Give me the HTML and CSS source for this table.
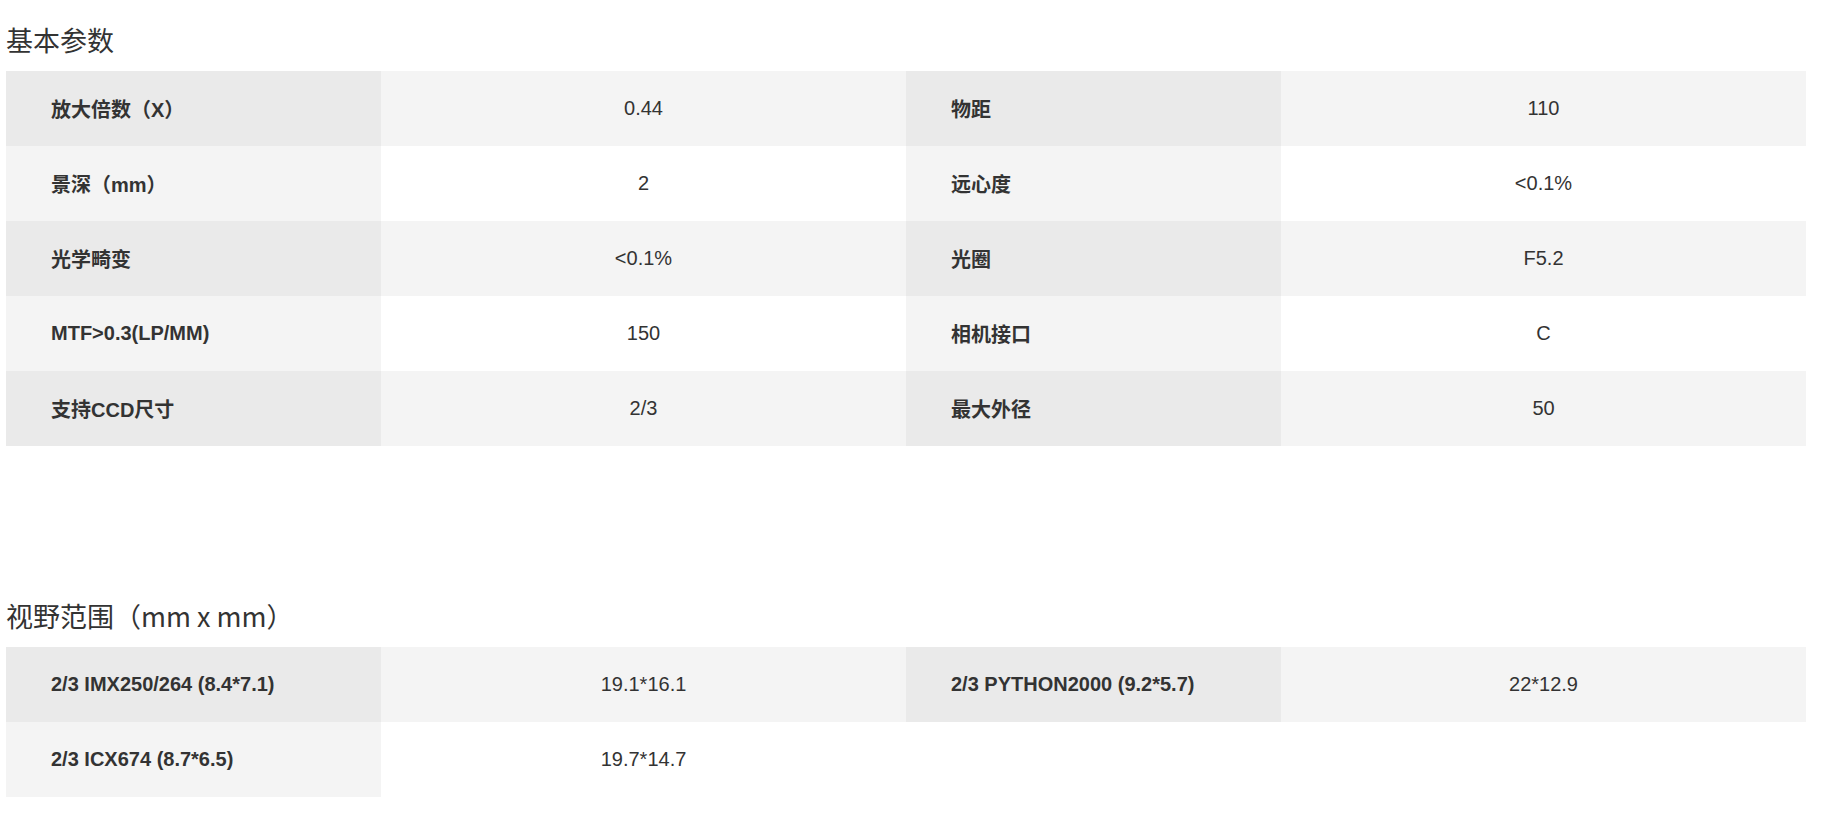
FILE: index.html
```html
<!DOCTYPE html>
<html lang="zh-CN">
<head>
<meta charset="utf-8">
<title>基本参数</title>
<link rel="stylesheet" href="styles.css">
</head>
<body>
<div class="page">
  <section class="spec">
    <h3 class="spec-title">基本参数</h3>
    <table class="spec-table">
      <colgroup>
        <col class="c-label"><col class="c-value"><col class="c-label"><col class="c-value">
      </colgroup>
      <tbody>
        <tr><th>放大倍数（X）</th><td>0.44</td><th>物距</th><td>110</td></tr>
        <tr><th>景深（mm）</th><td>2</td><th>远心度</th><td>&lt;0.1%</td></tr>
        <tr><th>光学畸变</th><td>&lt;0.1%</td><th>光圈</th><td>F5.2</td></tr>
        <tr><th>MTF&gt;0.3(LP/MM)</th><td>150</td><th>相机接口</th><td>C</td></tr>
        <tr><th>支持CCD尺寸</th><td>2/3</td><th>最大外径</th><td>50</td></tr>
      </tbody>
    </table>
  </section>

  <section class="spec spec-fov">
    <h3 class="spec-title">视野范围（mm x mm）</h3>
    <table class="spec-table">
      <colgroup>
        <col class="c-label"><col class="c-value"><col class="c-label"><col class="c-value">
      </colgroup>
      <tbody>
        <tr><th>2/3 IMX250/264 (8.4*7.1)</th><td>19.1*16.1</td><th>2/3 PYTHON2000 (9.2*5.7)</th><td>22*12.9</td></tr>
        <tr><th>2/3 ICX674 (8.7*6.5)</th><td>19.7*14.7</td><td class="empty"></td><td class="empty"></td></tr>
      </tbody>
    </table>
  </section>
</div>
</body>
</html>
```

FILE: styles.css
```css
html, body {
  margin: 0;
  padding: 0;
  background: #ffffff;
}

.page {
  padding: 0 0 0 6px;
  color: #333333;
  font-family: "Liberation Sans", Arial, "Noto Sans CJK SC", sans-serif;
}

.spec-fov {
  margin-top: 130px;
}

.spec-title {
  margin: 0;
  padding: 20px 0 11px 0;
  height: 40px;
  line-height: 40px;
  font-size: 27px;
  font-weight: normal;
  font-family: "Noto Sans CJK SC", sans-serif;
  color: #333333;
}

.spec-table {
  width: 1800px;
  table-layout: fixed;
  border-collapse: collapse;
  border-spacing: 0;
}

.c-label {
  width: 375px;
}

.c-value {
  width: 525px;
}

.spec-table th,
.spec-table td {
  height: 75px;
  padding: 0;
  font-size: 20px;
  vertical-align: middle;
  white-space: nowrap;
}

.spec-table th {
  text-align: left;
  padding-left: 45px;
  font-weight: bold;
  color: #333333;
}

.spec-table td {
  text-align: center;
  font-weight: normal;
  color: #333333;
}

.spec-table tr:nth-child(odd) th {
  background: #eaeaea;
}

.spec-table tr:nth-child(odd) td {
  background: #f4f4f4;
}

.spec-table tr:nth-child(even) th {
  background: #f4f4f4;
}

.spec-table tr:nth-child(even) td {
  background: #ffffff;
}

.spec-table tr:nth-child(even) td.empty,
.spec-table tr:nth-child(odd) td.empty {
  background: #ffffff;
}
```
